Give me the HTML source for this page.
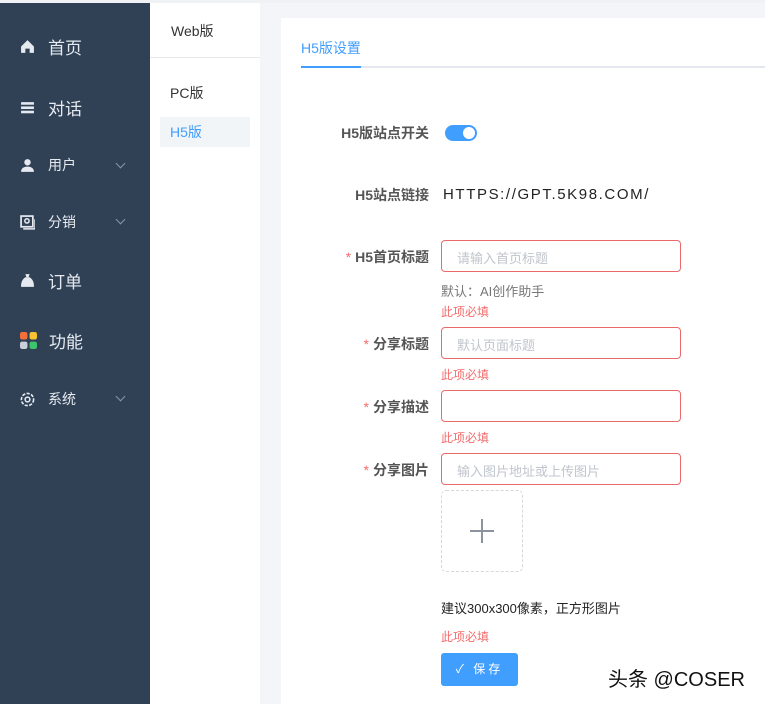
<!DOCTYPE html>
<html><head><meta charset="utf-8"><style>
*{margin:0;padding:0;box-sizing:border-box}
body{width:765px;height:704px;overflow:hidden;background:#f3f5f8;font-family:"Liberation Sans","Noto Sans CJK SC",sans-serif;position:relative}
.a{position:absolute;white-space:nowrap}
#side{position:absolute;left:0;top:0;width:150px;height:704px;background:#304156;border-top:3px solid #f0f2f5}
.mi{position:absolute;left:20px;color:#e6eaf0;font-size:17px;display:flex;align-items:center}
.mi.s{font-size:14px}
.ic{width:15px;height:15px;margin-right:13px;display:inline-block}
.chev{position:absolute;left:117px;width:7px;height:7px;border-right:1px solid #8a96a6;border-bottom:1px solid #8a96a6;transform:rotate(45deg)}
#sub{position:absolute;left:150px;top:3px;width:110px;height:701px;background:#fff}
#card{position:absolute;left:281px;top:18px;width:484px;height:686px;background:#fff}
.lbl{position:absolute;font-size:14px;font-weight:bold;color:#555;text-align:right;right:336px}
.lbl i{color:#f56c6c;font-style:normal;font-weight:normal;margin-right:4px}
.inp{position:absolute;left:441px;width:240px;height:32px;border:1px solid #e86a6a;border-radius:4px;font-size:13px;color:#c0c4cc;padding:7px 15px}
.err{position:absolute;left:441px;font-size:12px;color:#f56c6c}
</style></head><body>
<div class="a" style="left:0;top:0;width:765px;height:3px;background:#f0f2f5"></div>
<div id="side">
<div class="mi" style="top:31px"><svg class="ic" viewBox="0 0 14 14"><path d="M7 1L1 7v6h4V9h4v4h4V7z" fill="#e6eaf0"/></svg>首页</div>
<div class="mi" style="top:92px"><svg class="ic" viewBox="0 0 14 14"><rect x="1" y="2" width="12" height="2.4" fill="#e6eaf0"/><rect x="1" y="6" width="12" height="2.4" fill="#e6eaf0"/><rect x="1" y="10" width="12" height="2.4" fill="#e6eaf0"/></svg>对话</div>
<div class="mi s" style="top:152px"><svg class="ic" viewBox="0 0 14 14"><circle cx="7" cy="4" r="3" fill="#e6eaf0"/><path d="M1 13c0-4 3-5 6-5s6 1 6 5z" fill="#e6eaf0"/></svg>用户</div><div class="chev" style="top:157px"></div>
<div class="mi s" style="top:209px"><svg class="ic" viewBox="0 0 14 14"><rect x="1" y="1" width="11" height="10" fill="none" stroke="#e6eaf0" stroke-width="1.6"/><circle cx="6.5" cy="5.5" r="2" fill="none" stroke="#e6eaf0" stroke-width="1.4"/><path d="M3 13h11V4" fill="none" stroke="#e6eaf0" stroke-width="1.4"/></svg>分销</div><div class="chev" style="top:213px"></div>
<div class="mi" style="top:265px"><svg class="ic" viewBox="0 0 14 14"><path d="M5 1h4L8 4h-2z" fill="#e6eaf0"/><path d="M5 4h4c3 2 4 5 4 8v1H1v-1c0-3 1-6 4-8z" fill="#e6eaf0"/></svg>订单</div>
<div class="mi" style="top:325px"><svg class="ic" viewBox="0 0 16 16" style="width:17px;height:17px;margin-right:12px"><rect x="0" y="0" width="7" height="7" rx="2" fill="#f56f38"/><rect x="9" y="0" width="7" height="7" rx="2" fill="#f7c331"/><rect x="0" y="9" width="7" height="7" rx="2" fill="#c9d0da"/><rect x="9" y="9" width="7" height="7" rx="2" fill="#3dc56e"/></svg>功能</div>
<div class="mi s" style="top:386px"><svg class="ic" viewBox="0 0 14 14"><circle cx="7" cy="7" r="5.7" fill="none" stroke="#e6eaf0" stroke-width="1.5" stroke-dasharray="3 1.3"/><circle cx="7" cy="7" r="2.2" fill="none" stroke="#e6eaf0" stroke-width="1.4"/></svg>系统</div><div class="chev" style="top:390px"></div>
</div>
<div id="sub">
<div class="a" style="left:21px;top:18px;font-size:14px;color:#333">Web版</div>
<div class="a" style="left:0;top:54px;width:110px;height:1px;background:#e6e8eb"></div>
<div class="a" style="left:20px;top:80px;font-size:14px;color:#333">PC版</div>
<div class="a" style="left:10px;top:114px;width:90px;height:30px;background:#f2f5f8"></div>
<div class="a" style="left:20px;top:119px;font-size:14px;color:#409eff">H5版</div>
</div>
<div id="card"></div>
<div class="a" style="left:301px;top:38px;font-size:14px;color:#409eff">H5版设置</div>
<div class="a" style="left:301px;top:66px;width:464px;height:2px;background:#e4e7ed"></div>
<div class="a" style="left:301px;top:66px;width:60px;height:2px;background:#409eff"></div>

<div class="lbl" style="top:123px">H5版站点开关</div>
<div class="a" style="left:445px;top:125px;width:32px;height:16px;border-radius:8px;background:#409eff"><div class="a" style="left:18px;top:2px;width:12px;height:12px;border-radius:50%;background:#fff"></div></div>
<div class="lbl" style="top:185px">H5站点链接</div>
<div class="a" style="left:443px;top:186px;font-size:15px;color:#222;letter-spacing:1.6px">HTTPS://GPT.5K98.COM/</div>

<div class="lbl" style="top:247px"><i>*</i>H5首页标题</div>
<div class="inp" style="top:240px">请输入首页标题</div>
<div class="a" style="left:441px;top:281px;font-size:13px;color:#777">默认：AI创作助手</div>
<div class="err" style="top:303px">此项必填</div>

<div class="lbl" style="top:334px"><i>*</i>分享标题</div>
<div class="inp" style="top:327px">默认页面标题</div>
<div class="err" style="top:366px">此项必填</div>

<div class="lbl" style="top:397px"><i>*</i>分享描述</div>
<div class="inp" style="top:390px"></div>
<div class="err" style="top:429px">此项必填</div>

<div class="lbl" style="top:460px"><i>*</i>分享图片</div>
<div class="inp" style="top:453px">输入图片地址或上传图片</div>
<div class="a" style="left:441px;top:490px;width:82px;height:82px;border:1px dashed #d4d8de;border-radius:5px"></div>
<div class="a" style="left:470px;top:530px;width:24px;height:1.5px;background:#8c939d"></div>
<div class="a" style="left:481px;top:519px;width:1.5px;height:24px;background:#8c939d"></div>
<div class="a" style="left:441px;top:598px;font-size:13px;color:#222">建议300x300像素，正方形图片</div>
<div class="err" style="top:628px">此项必填</div>
<div class="a" style="left:441px;top:653px;width:77px;height:33px;background:#409eff;border-radius:3px;color:#fff;font-size:12px;text-align:center;line-height:33px;letter-spacing:3px">✓ 保存</div>
<div class="a" style="left:608px;top:663px;font-size:20px;color:#111;text-shadow:0 0 2px #fff">头条 @COSER</div>
</body></html>
